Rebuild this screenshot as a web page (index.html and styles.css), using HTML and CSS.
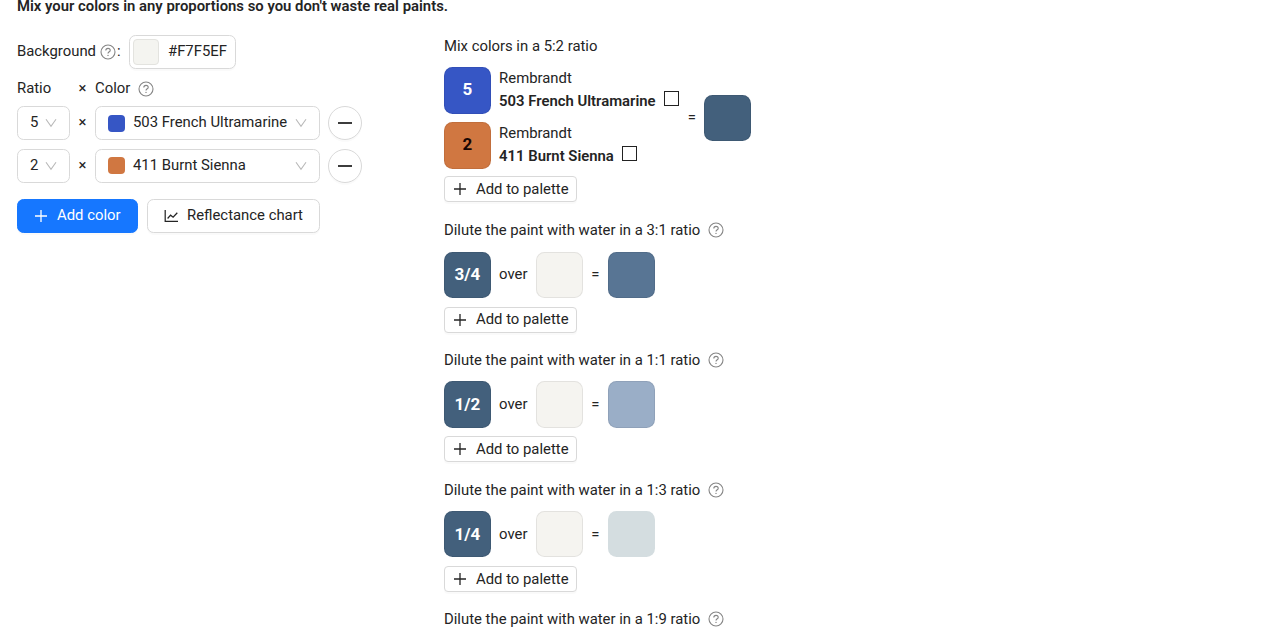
FILE: index.html
```
<!DOCTYPE html>
<html lang="en">
<head>
<meta charset="utf-8">
<title>Color mixing</title>
<link rel="stylesheet" href="styles.css">
</head>
<body>
<svg class="defs" width="0" height="0">
  <symbol id="help" viewBox="0 0 16 16"><circle cx="8" cy="8" r="7" fill="none" stroke="currentColor" stroke-width="1.1"/><path d="M5.8 6.5C5.8 5.1 6.7 4.4 8 4.4S10.2 5.2 10.2 6.4C10.2 7.8 8 7.8 8 9.6" fill="none" stroke="currentColor" stroke-width="1.1"/><circle cx="8" cy="11.4" r=".7" fill="currentColor"/></symbol>
  <symbol id="plus" viewBox="0 0 14 14"><path d="M7 1V13M1 7H13" fill="none" stroke="currentColor" stroke-width="1.3"/></symbol>
  <symbol id="down" viewBox="0 0 12 10"><path d="M1 1.2L6 8.2L11 1.2" fill="none" stroke="currentColor" stroke-width="1.1"/></symbol>
  <symbol id="chart" viewBox="0 0 15 14"><path d="M1.2 1V12.4H14M3.6 9.5L6.6 6.2L9.1 8.2L13.3 3.8" fill="none" stroke="currentColor" stroke-width="1.25"/></symbol>
</svg>
<h1 class="lead">Mix your colors in any proportions so you don't waste real paints.</h1>
<main class="layout">
  <section class="form">
    <div class="background-row"><span>Background</span><svg class="help"><use href="#help"/></svg><span class="colon">:</span><button class="picker"><span class="picker-color"></span><span>#F7F5EF</span></button></div>
    <div class="labels"><span class="ratio-label">Ratio</span><span class="times">×</span><span>Color</span><svg class="help"><use href="#help"/></svg></div>
    <div class="color-row">
      <div class="select ratio"><span>5</span><svg class="down"><use href="#down"/></svg></div><span class="times">×</span>
      <div class="select color"><i class="chip ultramarine"></i><span>503 French Ultramarine</span><svg class="down"><use href="#down"/></svg></div>
      <button class="remove" aria-label="Remove"><i class="minus"></i></button>
    </div>
    <div class="color-row">
      <div class="select ratio"><span>2</span><svg class="down"><use href="#down"/></svg></div><span class="times">×</span>
      <div class="select color"><i class="chip sienna"></i><span>411 Burnt Sienna</span><svg class="down"><use href="#down"/></svg></div>
      <button class="remove" aria-label="Remove"><i class="minus"></i></button>
    </div>
    <div class="actions"><button class="button primary"><svg class="plus"><use href="#plus"/></svg><span>Add color</span></button><button class="button chart"><svg class="chart-icon"><use href="#chart"/></svg><span>Reflectance chart</span></button></div>
  </section>
  <section class="results">
    <article class="mix">
      <div class="title">Mix colors in a 5:2 ratio</div>
      <div class="equation">
        <div class="parts">
          <div class="part"><span class="swatch ultramarine">5</span><div class="paint"><div>Rembrandt</div><div class="name"><b>503 French Ultramarine</b><i class="opacity"></i></div></div></div>
          <div class="part"><span class="swatch sienna dark-text">2</span><div class="paint"><div>Rembrandt</div><div class="name"><b>411 Burnt Sienna</b><i class="opacity"></i></div></div></div>
        </div>
        <span class="equals">=</span><span class="swatch mixed"></span>
      </div>
      <button class="add"><svg class="plus"><use href="#plus"/></svg><span>Add to palette</span></button>
    </article>
    <article class="dilution">
      <div class="title"><span>Dilute the paint with water in a 3:1 ratio</span><svg class="help"><use href="#help"/></svg></div>
      <div class="equation"><span class="swatch mixed">3/4</span><span class="over">over</span><span class="swatch paper"></span><span class="equals">=</span><span class="swatch d31"></span></div>
      <button class="add"><svg class="plus"><use href="#plus"/></svg><span>Add to palette</span></button>
    </article>
    <article class="dilution">
      <div class="title"><span>Dilute the paint with water in a 1:1 ratio</span><svg class="help"><use href="#help"/></svg></div>
      <div class="equation"><span class="swatch mixed">1/2</span><span class="over">over</span><span class="swatch paper"></span><span class="equals">=</span><span class="swatch d11"></span></div>
      <button class="add"><svg class="plus"><use href="#plus"/></svg><span>Add to palette</span></button>
    </article>
    <article class="dilution">
      <div class="title"><span>Dilute the paint with water in a 1:3 ratio</span><svg class="help"><use href="#help"/></svg></div>
      <div class="equation"><span class="swatch mixed">1/4</span><span class="over">over</span><span class="swatch paper"></span><span class="equals">=</span><span class="swatch d13"></span></div>
      <button class="add"><svg class="plus"><use href="#plus"/></svg><span>Add to palette</span></button>
    </article>
    <article class="dilution last">
      <div class="title"><span>Dilute the paint with water in a 1:9 ratio</span><svg class="help"><use href="#help"/></svg></div>
    </article>
  </section>
</main>
</body>
</html>
```
FILE: styles.css
```
* { box-sizing: border-box; }
body { margin: 0; height: 640px; background: #fff; color: #242424; font: 14.86px/23.3px Roboto, sans-serif; }
svg { flex: none; display: block; }
span, b { white-space: nowrap; }
button { font: inherit; color: inherit; margin: 0; padding: 0; background: #fff; border: 1px solid #d9d9d9; display: flex; align-items: center; box-shadow: 0 2px 0 rgba(0,0,0,.02); }
.defs { position: absolute; }
.lead { margin: 0; padding-left: 17px; height: 35px; font-size: 14.87px; font-weight: 600; line-height: 12px; white-space: nowrap; }
.layout { display: flex; padding-left: 17px; }
.form { width: 427px; flex: none; }
.help { width: 16px; height: 16px; color: #858585; }
.background-row { display: flex; align-items: center; height: 34px; }
.background-row .help { margin-left: 4px; }
.colon { margin-left: 1px; width: 12px; }
.picker { width: 107px; height: 34px; border-radius: 6.5px; padding-left: 3px; gap: 9px; }
.picker-color { width: 26px; height: 26px; border: 1px solid #e3e3df; border-radius: 4px; background: #f4f4f0; }
.labels { display: flex; align-items: center; height: 37px; padding-top: 3px; }
.ratio-label { width: 53px; }
.times { width: 25px; text-align: center; }
.labels .help { margin-left: 8px; }
.color-row { display: flex; align-items: center; height: 34px; margin-bottom: 8.5px; }
.select { height: 34px; border: 1px solid #d9d9d9; border-radius: 6.5px; display: flex; align-items: center; padding: 0 12px; }
.select.ratio { width: 53px; }
.select.color { width: 225px; padding-left: 12px; }
.down { width: 12px; height: 10px; color: #b8b8b8; margin-left: auto; }
.chip { width: 17px; height: 17px; border-radius: 4px; margin-right: 8px; }
.ultramarine { background: #3656c5; }
.sienna { background: #d07741; }
.remove { width: 34px; height: 34px; border-radius: 50%; justify-content: center; margin-left: 8px; }
.minus { width: 14px; height: 2px; background: #3c3c3c; }
.actions { display: flex; gap: 9px; margin-top: 16.5px; }
.button { height: 34px; border-radius: 6.5px; }
.primary { width: 121px; padding-left: 16px; gap: 9px; color: #fff; background: #1677ff; border-color: #1677ff; }
.chart { width: 173px; padding-left: 16px; gap: 8px; }
.plus { width: 14px; height: 14px; }
.chart-icon { width: 15px; height: 14px; }
.title { height: 23px; display: flex; align-items: center; }
.title .help { margin: 0 0 1px 8px; }
.mix { height: 184.3px; }
.mix .equation { height: 101.7px; margin-top: 9px; }
.equation { height: 47px; display: flex; align-items: center; }
.parts { display: flex; flex-direction: column; gap: 8.5px; }
.part { display: flex; }
.swatch { width: 46.6px; height: 46.6px; border: 1px solid rgba(0,0,0,.07); border-radius: 8.5px; display: flex; align-items: center; justify-content: center; color: #fff; font-weight: 700; font-size: 17px; flex: none; }
.part .swatch { padding-bottom: 2px; }
.dark-text { color: #180604; }
.mixed { background: #43607c; }
.paper { background: #f5f4f0; }
.d31 { background: #587594; }
.d11 { background: #9aaec7; }
.d13 { background: #d4dde0; border-color: transparent; background-clip: border-box; }
.paint { margin-left: 8.5px; }
.paint > div { height: 23.3px; }
.paint b { font-weight: 600; }
.name { display: flex; }
.opacity { width: 15px; height: 15px; border: 1px solid #222; margin: 1px 0 0 8.5px; }
.equals { width: 25.4px; text-align: center; }
.add { width: 133px; height: 26px; margin-top: 8.5px; border-radius: 4px; padding-left: 8px; gap: 9px; }
.mix .add { margin-top: 7.8px; }
.dilution { height: 129.7px; }
.dilution.last { height: auto; }
.dilution .equation { margin-top: 9px; }
.over { margin: 0 8.5px; }
```
